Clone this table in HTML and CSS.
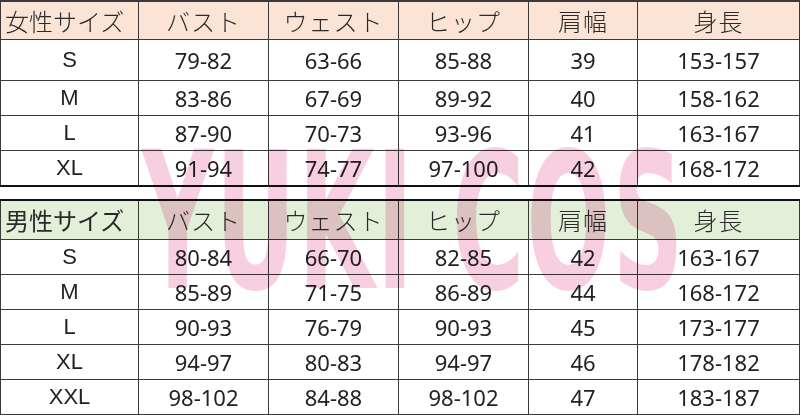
FILE: index.html
```html
<!DOCTYPE html>
<html lang="ja">
<head>
<meta charset="utf-8">
<title>サイズ表</title>
<link rel="stylesheet" href="styles.css">
</head>
<body>
<div class="page">
  <table class="chart chart-women">
    <colgroup><col class="c1"><col class="c2"><col class="c3"><col class="c4"><col class="c5"><col class="c6"></colgroup>
    <thead>
      <tr class="head"><th class="first">女性サイズ</th><th>バスト</th><th>ウェスト</th><th>ヒップ</th><th>肩幅</th><th>身長</th></tr>
    </thead>
    <tbody>
      <tr class="r41"><td class="size">S</td><td>79-82</td><td>63-66</td><td>85-88</td><td>39</td><td>153-157</td></tr>
      <tr class="r35"><td class="size">M</td><td>83-86</td><td>67-69</td><td>89-92</td><td>40</td><td>158-162</td></tr>
      <tr class="r35"><td class="size">L</td><td>87-90</td><td>70-73</td><td>93-96</td><td>41</td><td>163-167</td></tr>
      <tr class="r36 last"><td class="size">XL</td><td>91-94</td><td>74-77</td><td>97-100</td><td>42</td><td>168-172</td></tr>
    </tbody>
  </table>
  <table class="chart chart-men">
    <colgroup><col class="c1"><col class="c2"><col class="c3"><col class="c4"><col class="c5"><col class="c6"></colgroup>
    <thead>
      <tr class="head"><th class="first">男性サイズ</th><th>バスト</th><th>ウェスト</th><th>ヒップ</th><th>肩幅</th><th>身長</th></tr>
    </thead>
    <tbody>
      <tr class="r35"><td class="size">S</td><td>80-84</td><td>66-70</td><td>82-85</td><td>42</td><td>163-167</td></tr>
      <tr class="r35"><td class="size">M</td><td>85-89</td><td>71-75</td><td>86-89</td><td>44</td><td>168-172</td></tr>
      <tr class="r35"><td class="size">L</td><td>90-93</td><td>76-79</td><td>90-93</td><td>45</td><td>173-177</td></tr>
      <tr class="r35"><td class="size">XL</td><td>94-97</td><td>80-83</td><td>94-97</td><td>46</td><td>178-182</td></tr>
      <tr class="r35"><td class="size">XXL</td><td>98-102</td><td>84-88</td><td>98-102</td><td>47</td><td>183-187</td></tr>
    </tbody>
  </table>
  <div class="watermark" aria-hidden="true">YUKI COS</div>
</div>
</body>
</html>
```
FILE: styles.css
```css
html, body {
  margin: 0;
  padding: 0;
  background: #fff;
}
.page {
  position: relative;
  width: 800px;
  height: 415px;
  overflow: hidden;
}
.chart {
  width: 799px;
  border-collapse: collapse;
  table-layout: fixed;
  color: #222;
}
.c1 { width: 138px; }
.c2 { width: 130px; }
.c3 { width: 130px; }
.c4 { width: 130px; }
.c5 { width: 109px; }
.c6 { width: 162px; }

.chart th, .chart td {
  border: 1.5px solid #3a3a3a;
  padding: 0;
  text-align: center;
  vertical-align: middle;
  overflow: hidden;
  white-space: nowrap;
}
.chart th {
  font-family: "Noto Sans CJK JP", sans-serif;
  font-weight: 300;
  font-size: 24px;
  letter-spacing: 1px;
  color: #2a2a2a;
}
.chart th.first {
  text-align: left;
  padding-left: 4px;
  letter-spacing: 0;
}
.chart td {
  font-family: "Noto Sans", "Open Sans", sans-serif;
  font-size: 22px;
  font-weight: 400;
}
.chart td.size {
  font-family: "Liberation Sans", Arial, sans-serif;
  font-size: 22px;
}
.chart-women .head { height: 38px; background: #fbe4d5; }
.chart-men .head { height: 39px; background: #e2efd9; }
.chart-men .head th.first { font-weight: 400; }
.r41 { height: 41px; }
.r35 { height: 35px; }
.r36 { height: 36px; }

.chart-women thead th { border-top-width: 2px; }
.chart-women tr.last td { border-bottom: 2.5px solid #111; }
.chart-men { margin-top: 12px; }
.chart-men thead th { border-top: 2.5px solid #111; }

.watermark {
  position: absolute;
  left: 142px;
  top: 128px;
  font-family: "DejaVu Sans", sans-serif;
  font-weight: bold;
  font-size: 190px;
  line-height: 190px;
  letter-spacing: 4px;
  color: #f2a6c9;
  opacity: 0.55;
  mix-blend-mode: multiply;
  transform-origin: 0 0;
  transform: scaleX(0.52);
  white-space: nowrap;
  pointer-events: none;
}
```
